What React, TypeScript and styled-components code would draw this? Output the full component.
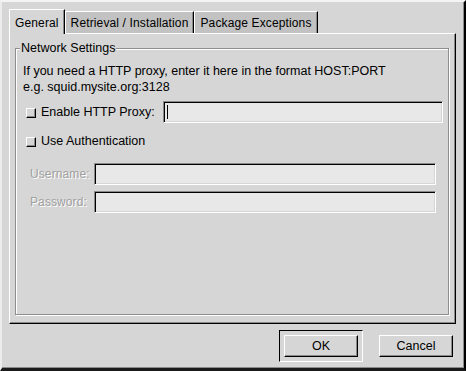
import React from "react";
import styled, { createGlobalStyle } from "styled-components";

const Global = createGlobalStyle`
  html, body { margin: 0; padding: 0; background: #d6d6d6; }
  * { box-sizing: border-box; }
  body { font-family: "Liberation Sans", Arial, sans-serif; font-size: 12.5px; color: #000; }
`;

const Window = styled.div`
  width: 466px;
  height: 371px;
  background: #d6d6d6;
  border-style: solid;
  border-width: 2px 2px 3px 2px;
  border-color: #f4f4f4 #000 #1a1a1a #ececec;
  box-shadow: inset -1px -1px 0 #8a8a8a;
  padding: 7px 0 0 7px;
  display: flex;
  flex-direction: column;
`;

const Notebook = styled.div`
  width: 447px;
  display: flex;
  flex-direction: column;
`;

const TabRow = styled.div`
  display: flex;
  align-items: flex-end;
  height: 25px;
  margin-bottom: -1px;
  position: relative;
  z-index: 1;
`;

const Tab = styled.div<{ $active?: boolean }>`
  height: ${(p) => (p.$active ? 25 : 22)}px;
  margin-bottom: ${(p) => (p.$active ? 0 : 1)}px;
  padding: ${(p) => (p.$active ? 1 : 0)}px 5px 0 5px;
  background: ${(p) => (p.$active ? "#d6d6d6" : "#c2c2c2")};
  border-left: 1px solid #fff;
  border-top: 1px solid #fff;
  border-right: 1px solid #000;
  box-shadow: inset -1px 0 0 #8a8a8a;
  display: flex;
  align-items: center;
  white-space: nowrap;
  font-size: 12px;
  letter-spacing: 0.13px;
  line-height: 14px;
`;

const Page = styled.div`
  height: 291px;
  border-top: 1px solid #fff;
  border-left: 1px solid #fff;
  border-right: 1px solid #000;
  border-bottom: 1px solid #000;
  box-shadow: inset -1px -1px 0 #8a8a8a;
  padding: 14px 6px 8px 5px;
  display: flex;
  flex-direction: column;
`;

const Group = styled.div`
  position: relative;
  width: 434px;
  height: 267px;
  border: 1px solid #8e8e8e;
  box-shadow: inset 1px 1px 0 #fff, 1px 1px 0 #fff;
  padding: 14px 5px 0 7px;
  display: flex;
  flex-direction: column;
`;

const Legend = styled.div`
  position: absolute;
  left: 4px;
  top: -8px;
  padding: 0 1px;
  background: #d6d6d6;
  line-height: 14px;
`;

const Text = styled.div`
  line-height: 16px;
`;

const CheckRow = styled.div<{ $mt: number; $h: number }>`
  display: flex;
  align-items: center;
  height: ${(p) => p.$h}px;
  margin-top: ${(p) => p.$mt}px;
`;

const Check = styled.label`
  display: flex;
  align-items: center;
  margin-left: 3px;
  white-space: nowrap;
`;

const Indicator = styled.span`
  width: 10px;
  height: 10px;
  background: #d6d6d6;
  border-top: 1px solid #fff;
  border-left: 1px solid #fff;
  border-right: 1px solid #000;
  border-bottom: 1px solid #000;
  box-shadow: inset -1px -1px 0 #8a8a8a;
  margin-right: 5px;
  margin-top: 1px;
`;

const Entry = styled.div`
  height: 22px;
  flex: 1;
  background: #e8e8e8;
  border-top: 1px solid #8a8a8a;
  border-left: 1px solid #8a8a8a;
  border-right: 1px solid #fff;
  border-bottom: 1px solid #fff;
  box-shadow: inset 1px 1px 0 #000, inset -1px -1px 0 #d6d6d6;
  padding: 3px 0 3px 3px;
  display: flex;
`;

const ProxyEntry = styled(Entry)`
  margin-left: 8px;
`;

const Cursor = styled.span`
  width: 1px;
  height: 14px;
  background: #000;
`;

const AuthGrid = styled.div`
  display: grid;
  grid-template-columns: 57px 1fr;
  column-gap: 7px;
  row-gap: 6px;
  align-items: center;
  margin: 14px 7px 0 7px;
`;

const DimLabel = styled.span`
  color: #a0a0a0;
  text-shadow: 1px 1px 0 #fff;
  white-space: nowrap;
  font-size: 12px;
  letter-spacing: 0.1px;
`;

const ButtonBar = styled.div`
  display: flex;
  justify-content: flex-end;
  align-items: center;
  gap: 16px;
  margin-top: 6px;
  padding-right: 11px;
`;

const DefaultRing = styled.div`
  padding: 4px;
  border-top: 1px solid #000;
  border-left: 1px solid #000;
  border-right: 1px solid #fff;
  border-bottom: 1px solid #fff;
`;

const Button = styled.button`
  width: 74px;
  height: 22px;
  margin: 0;
  padding: 0;
  font: inherit;
  color: #000;
  background: #d6d6d6;
  border-top: 1px solid #fff;
  border-left: 1px solid #fff;
  border-right: 1px solid #000;
  border-bottom: 1px solid #000;
  box-shadow: inset -1px -1px 0 #8a8a8a;
  border-radius: 0;
  outline: none;
`;

export default function App() {
  return (
    <>
      <Global />
      <Window>
        <Notebook>
          <TabRow>
            <Tab $active>General</Tab>
            <Tab>Retrieval / Installation</Tab>
            <Tab>Package Exceptions</Tab>
          </TabRow>
          <Page>
            <Group>
              <Legend>Network Settings</Legend>
              <Text>If you need a HTTP proxy, enter it here in the format HOST:PORT</Text>
              <Text>e.g. squid.mysite.org:3128</Text>
              <CheckRow $mt={6} $h={22}>
                <Check>
                  <Indicator />
                  Enable HTTP Proxy:
                </Check>
                <ProxyEntry>
                  <Cursor />
                </ProxyEntry>
              </CheckRow>
              <CheckRow $mt={10} $h={16}>
                <Check>
                  <Indicator />
                  Use Authentication
                </Check>
              </CheckRow>
              <AuthGrid>
                <DimLabel>Username:</DimLabel>
                <Entry />
                <DimLabel>Password:</DimLabel>
                <Entry />
              </AuthGrid>
            </Group>
          </Page>
        </Notebook>
        <ButtonBar>
          <DefaultRing>
            <Button>OK</Button>
          </DefaultRing>
          <Button>Cancel</Button>
        </ButtonBar>
      </Window>
    </>
  );
}
